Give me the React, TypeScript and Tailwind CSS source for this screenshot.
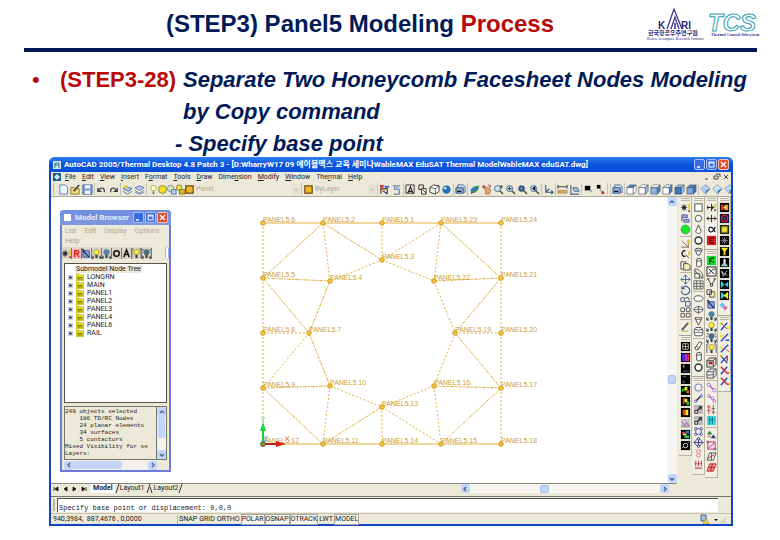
import type { ReactNode } from 'react'
import clsx from 'clsx'

const line = (d: string, color = '#222', width = 1, fill = 'none') => (
  <path d={d} stroke={color} strokeWidth={width} fill={fill} />
)
const tile = (children: ReactNode, bg = '#000') => (
  <>
    <rect x="1" y="1" width="10" height="10" fill={bg} />
    {children}
  </>
)
const cube = (top: string, left: string, right: string) => (
  <>
    <path d="M1 4 4 1h7L8 4z" fill={top} stroke="#345" strokeWidth=".6" />
    <path d="M1 4h7v7H1z" fill={left} stroke="#345" strokeWidth=".6" />
    <path d="M8 4l3-3v7l-3 3z" fill={right} stroke="#345" strokeWidth=".6" />
  </>
)
const gem = (a: string, b: string) => (
  <>
    <path d="M6 1l5 4-5 6-5-6z" fill={a} stroke="#456" strokeWidth=".6" />
    <path d="M1 5l5 2v4zM6 7l5-2-5-4-5 4z" fill={b} />
  </>
)
const lens = (extra: ReactNode) => (
  <>
    <path d="M7.5 7.5 11 11" stroke="#553" strokeWidth="1.6" />
    <circle cx="5" cy="5" r="3.3" fill="#cfe2f5" stroke="#46688c" />
    {extra}
  </>
)
const bulb = (color: string, extra?: ReactNode) => (
  <>
    <circle cx="6" cy="4.5" r="3" fill={color} stroke="#665" strokeWidth=".6" />
    <path d="M4.8 7.5h2.4V11H4.8z" fill="#345" />
    {extra}
  </>
)
const corners = line('M1 11l2-2M11 11 9 9M1 8v3h2M11 8v3H9', '#123')
const dots = (points: number[][], color: string, r = 1.3) =>
  points.map(([x, y]) => <circle key={`${x}-${y}`} cx={x} cy={y} r={r} fill="#fff" stroke={color} strokeWidth=".9" />)

const icons: Record<string, ReactNode> = {
  new: line('M2 1h6l2.500 3v7H2z', '#5b7fae', 1, '#eef5ff'),
  open: <>{line('M1 4h4l1 1h4v6H1z', '#8a7430', 1, '#f3dc7e')}{line('M4 8l6-7', '#334', 1.6)}</>,
  save: <>{line('M1 1h10v10H1z', '#3d5f94', 1, '#7f9fd0')}<path d="M3 1h6v4H3zM3 7h6v4H3z" fill="#eef" /></>,
  undo: line('M2 4v4h4M3 8c1-5 7-5 6 1', '#334', 1.300),
  redo: line('M10 4v4H6M9 8C8 3 2 3 3 9', '#334', 1.300),
  layers: <>{line('M1 5l4-2 6 2-4 3z', '#5376ac', 1, '#a9c3e8')}{line('M1 8l5 3 5-3', '#5376ac')}<circle cx="4" cy="3" r="2" fill="#e6cf3a" /></>,
  layerState: <>{line('M1 4l5-2 5 2-5 3z', '#5376ac', 1, '#b9cfee')}{line('M1 7l5 3 5-3M1 9l5 2 5-2', '#6d87b4')}</>,
  bulbOn: <><circle cx="6" cy="4.500" r="3" fill="#ffffb0" stroke="#99975c" strokeWidth=".8" /><path d="M5 8h2v3H5z" fill="#778" /></>,
  sun: <circle cx="6" cy="6" r="4.300" fill="#f0e02a" stroke="#80803c" />,
  freeze: <><circle cx="5" cy="5" r="3.500" fill="#d9e6ba" stroke="#6f87a5" />{line('M6 6h5v5H6z', '#5c7bab', 1, '#b7cae6')}</>,
  lock: <><circle cx="4.500" cy="4" r="3" fill="#f1de55" stroke="#887621" />{line('M5 6h6v5H5z', '#887621', 1, '#e0b62b')}</>,
  swatch: <rect x="2" y="2" width="8" height="8" fill="#f0b428" stroke="#5e3d0c" strokeWidth="1.200" />,
  props: <><path d="M1 1h4v3H1z" fill="#c33" /><path d="M6 2h5v2H6z" fill="#36c" />{line('M2 11V5h7v6M4 7l5 4', '#446', 1.3)}<path d="M3 5h3v3H3z" fill="#e08a3c" /></>,
  match: <>{line('M2 2h8M4 2v4h5v5H3', '#6883a6', 1.3)}<path d="M5 3h4v3H5z" fill="#9cc1e5" /></>,
  dimA: <>{line('M1 1h9v9H1z', '#333')}{line('M3 10l3-7 3 8M4 8h4', '#222', 1.200)}</>,
  blocks: <>{line('M2 1h5v5H2z', '#333', 1, '#ddd')}{line('M5 5h5v6H5z', '#333', 1, '#f2f2f2')}{line('M6 6l4 4', '#333')}</>,
  box: <>{line('M1 4l4-3 6 1v6l-4 3-6-2z', '#333', 1, '#fff')}{line('M1 4l6 1 4-3M7 5v6', '#333', .8)}</>,
  ball: <><circle cx="6" cy="6" r="4.500" fill="#2870b8" /><circle cx="4.500" cy="4.500" r="1.600" fill="#b5dcf7" /></>,
  sheets: <>{line('M3 1h6l2 2v6H3z', '#46688c', 1, '#dbe8f8')}{line('M1 4h8v6H1z', '#2e5686', 1, '#8fb1dc')}{line('M2 8h5', '#123', 1.4)}</>,
  orbit: <><path d="M2 10C2 4 6 1 11 2 11 7 7 11 2 10z" fill="#2fa04a" /><path d="M1 7c2-3 6-5 9-3-2 4-6 5-9 3z" fill="#3577cf" />{line('M2 11l4-4', '#c33')}</>,
  pan: <><path d="M4 4h5l2 3-2 4H5z" fill="#e7a27d" stroke="#753" strokeWidth=".6" />{line('M1 3h4M3 1v4M8 1l3 2', '#b33', 1.200)}</>,
  zoomRt: lens(<path d="M9 1v4M7 3h4" stroke="#444" />),
  zoomIn: lens(<path d="M5 3v4M3 5h4" stroke="#224" />),
  zoomAll: lens(<path d="M3 3h4v4H3z" stroke="#224" fill="#6d90bd" />),
  zoomPrev: lens(<path d="M7 2 3 5l4 3z" fill="#224" />),
  ucs: line('M3 1v8h8M3 9l4-4M9 7l2 2-2 2', '#31547f', 1.200),
  dist: <>{line('M1 3h10M1 1v4M11 1v4', '#333')}<path d="M1 7h10v3H1z" fill="#e0b04b" stroke="#865" strokeWidth=".6" /></>,
  area: <>{line('M2 1v10h9', '#46688c', 1.200)}{line('M4 4h5l2 4H6z', '#46688c', 1, '#a9c3e8')}</>,
  flag: <><path d="M2 2h6v5H2z" fill="#000" /><path d="M8 7h2v2H8z" fill="#999" /></>,
  flags: <><path d="M2 1h4v4H2z" fill="#000" /><path d="M7 8h3v3H7z" fill="#c22" />{line('M5 5l3 4', '#777')}</>,
  vTop: cube('#4c86c6', '#fff', '#fff'),
  vBottom: cube('#fff', '#fff', '#9fc0e4'),
  vLeft: cube('#fff', '#8db4e0', '#4c86c6'),
  vRight: cube('#dcebfa', '#fff', '#4c86c6'),
  vFront: cube('#9fc0e4', '#3c78bb', '#9fc0e4'),
  vBack: cube('#4c86c6', '#7ea9da', '#3c78bb'),
  isoA: gem('#4c86c6', '#b5d0ee'),
  isoB: gem('#3c78bb', '#cfe2f6'),
  isoC: gem('#3c78bb', '#bfd8f3'),
  node: <><circle cx="4.500" cy="6" r="2.200" fill="#222" />{line('M1 6h7M4.500 2v8M2 3l5 6M7 3 2 9', '#333', .7)}<path d="M9 2h2v6H9z" fill="#e3cc1f" /><path d="M9 9h2v2H9z" fill="#b33" /></>,
  tree: <>{line('M2 2h6v3H2zM4 7h6v3H4z', '#5a62ac', 1, '#99a4df')}{line('M2 5v4', '#336')}</>,
  green: <circle cx="6" cy="6" r="4.800" fill="#15e825" stroke="#3a7a3a" strokeWidth=".7" />,
  axes: <>{line('M1 10h9M2 3l7 7V2', '#865', 1)}<path d="M8 2h3v4H8z" fill="#dfc93a" /></>,
  rotC: <>{line('M6 2C1 1 1 9 6 8', '#222', 1.500)}{line('M6 6l4 4', '#922')}<path d="M9 2h2v5H9z" fill="#dfc93a" /></>,
  copyDoc: <>{line('M1 2h5v8H1z', '#444', 1, '#fff')}{line('M4 4h5l2 2v5H4z', '#444', 1, '#f6eebb')}</>,
  move: line('M6 1v10M1 6h10M4 3l2-2 2 2M4 9l2 2 2-2M3 4 1 6l2 2M9 4l2 2-2 2', '#3b5f96', 1),
  rotate: line('M3 3c5-4 9 2 7 5-2 4-9 3-8-2M2 1v3h3', '#3b5f96', 1.200),
  scale: <>{line('M1 2h4v4H1zM6 6h5v5H6z', '#46607e', 1, '#dde6f2')}{line('M6 2c3-1 4 0 4 3', '#333')}</>,
  array: line('M1 1h4v4H1zM7 1h4v4H7zM1 7h4v4H1zM7 7h4v4H7z', '#555'),
  pencil: <>{line('M2 10l7-8', '#555', 2)}{line('M2 11h7', '#b9a130', 1)}<path d="M8 3l2-2 1 1-2 2z" fill="#d7b843" /></>,
  square: line('M2 2h8v8H2z', '#444', 1, '#fff'),
  circle: <circle cx="6" cy="6" r="3.500" fill="#fff" stroke="#444" />,
  cone: line('M6 1 3 8c0 3 6 3 6 0z', '#444', 1, '#fff'),
  ring: <circle cx="6" cy="6" r="3.800" fill="#fff" stroke="#333" strokeWidth="1.500" />,
  funnel: <>{line('M2 4l3 6h2l3-6', '#444', 1, '#fff')}<ellipse cx="6" cy="4" rx="4" ry="1.500" fill="#ddd" stroke="#444" /></>,
  cylinder: <>{line('M4 3v7c1 1 4 1 5 0V3', '#444', 1, '#fff')}<ellipse cx="6.500" cy="3" rx="2.500" ry="1.500" fill="#fff" stroke="#444" /></>,
  wedge: line('M2 1v10h9C11 5 7 1 2 1zM2 6h5v5M2 3l8 7', '#444', .9),
  grid: line('M1 2h10v9H1zM4 2v9M8 2v9M1 5h10M1 8h10', '#555', .9),
  ellipse: <ellipse cx="6" cy="6" rx="4.800" ry="3" fill="#fff" stroke="#444" />,
  ellipseX: <><ellipse cx="6" cy="6" rx="4.800" ry="3" fill="#fff" stroke="#444" />{line('M1 6h10M6 2v9', '#444', .8)}</>,
  drop: <>{line('M2 3l4 8 4-8z', '#444', 1, '#fff')}{line('M3 5h6', '#444', .8)}</>,
  drum: <>{line('M2 3c-1 2-1 4 0 7 2 1 6 1 8 0 1-3 1-5 0-7', '#444', 1, '#fff')}<ellipse cx="6" cy="3" rx="4" ry="1.500" fill="#fff" stroke="#444" />{line('M2 7h8', '#444', .8)}</>,
  tube: <>{line('M2 9 7 2l3 1-4 7z', '#444', 1, '#fff')}<circle cx="4" cy="9" r="1.800" fill="#fff" stroke="#444" /></>,
  arrowsIn: <>{line('M1 6h8M6 2v8M2 4v4M8 4l-2 2 2 2', '#222', 1)}<path d="M9 2h2v5H9z" fill="#dfc93a" /><path d="M9 8h2v2H9z" fill="#b33" /></>,
  arrowsOut: line('M1 6h10M6 2v8M3 4 1 6l2 2M9 4l2 2-2 2', '#222', 1),
  alpha: <><rect x="1" y="1" width="10" height="10" fill="#fff" />{line('M10 3C8 10 3 10 3 6s4-4 7 3', '#222', 1.300)}</>,
  redC: tile(line('M9 4C7 2 4 3 4 6s3 4 5 2M4 6h3', '#400', 1.300), '#e8161c'),
  greenF: tile(<>{line('M4 10V4l5-1M4 7l3-1', '#030', 1.400)}<circle cx="8" cy="8" r="1" fill="#a00" /></>, '#0ee52e'),
  spline: <>{line('M1 1h10v10H1z', '#222', 1, '#eee')}{line('M2 9c3-1 3-5 8-6M3 3l6 6', '#222')}</>,
  tri: <>{line('M2 2l4 7 4-7M1 2h3M8 2h3', '#333')}<circle cx="6" cy="9" r="1.400" fill="#ddd" stroke="#333" /></>,
  copyCube: <>{line('M1 2h5v5H1zM4 4h5v6H4z', '#444', 1, '#f4f1e0')}<path d="M9 5h2v5H9z" fill="#dfc93a" /></>,
  blueCube: <>{line('M2 3h7v7H2z', '#35509c', 1, '#8fa3dd')}{line('M2 3l7 7M1 1l3 2', '#224', 1.200)}</>,
  bulbBlue: bulb('#4f86b5', corners),
  bulbYellow: bulb('#ffee30', corners),
  bulbDark: bulb('#466c90', <>{corners}{line('M1 2h2M9 2h2M1 4v2M11 4v2', '#345')}</>),
  bulbBox: bulb('#ffee30', line('M1 1v10M11 1v10M1 1h2M9 1h2', '#555')),
  redCube: <>{line('M1 4l3-3h7v7l-3 3H1z', '#333', 1, '#ddd')}{line('M1 4h7l3-3M8 4v7', '#333', .9)}<path d="M3 5h4v3H3z" fill="#b22" /></>,
  greyCube: <>{line('M1 4l3-3h7v7l-3 3H1z', '#444', 1, '#e8e8e8')}{line('M1 4h7l3-3M8 4v7M2 8l6-1', '#444', .9)}</>,
  t1: tile(<><path d="M2 3h3v6H2z" fill="#e03020" /><path d="M6 3h4v6H6z" fill="#f09030" /><path d="M5 5h3v2H5z" fill="#fff37a" /></>),
  t2: tile(<><circle cx="6" cy="6" r="3.300" fill="none" stroke="#d22" strokeWidth="1.400" /><circle cx="6" cy="6" r="1.200" fill="#26c" /></>, '#15153a'),
  t3: tile(<path d="M3 3h6v6H3z" fill="#f2e642" stroke="#998d20" />, '#262618'),
  t4: tile(<>{line('M3 3l6 6M9 3 3 9M6 2v8M2 6h8', '#999', .8)}</>),
  t5: tile(<path d="M2 2h8L7 6v4H5V6z" fill="#f5e722" />),
  t6: tile(<><path d="M5 2h2v4l3 4H2l3-4z" fill="#9cc" /><path d="M5 3h2v3H5z" fill="#fff" /></>),
  t7: tile(line('M2 4l7 4M4 9l5-6M3 3l2 6', '#ccc', 1)),
  t8: tile(<><path d="M2 2l4 4-4 4z" fill="#20d5e8" /><path d="M10 3v6L6 6z" fill="#20d5e8" /></>),
  t9: tile(<><path d="M2 2l5 4-5 4z" fill="#20d5e8" /><path d="M10 2v8L5 6z" fill="#f5e722" /></>),
  pills: <>{line('M3 4l5 5', '#ef7ad0', 4)}{line('M2 3l3 3', '#5ec8ef', 4)}{line('M6 9l3-3', '#a03a80', .8)}</>,
  v1: <>{line('M2 10l7-8', '#2b45cf', 1.600)}<path d="M1 2h4v2H1zM8 6h3v3H8z" fill="#f0df36" />{line('M2 2l7 7', '#667')}</>,
  v2: <>{line('M2 10l8-8M7 9h4', '#2b45cf', 1.500)}<path d="M1 3h4v3H1z" fill="#f0df36" /></>,
  v3: <>{line('M2 10l8-8', '#2b45cf', 1.500)}<path d="M1 3l4 2-2 3z" fill="#f0df36" />{line('M8 7l3 3', '#d33')}</>,
  v4: <>{line('M2 10l7-8M2 2l7 8', '#2b45cf', 1.500)}{line('M9 2v6', '#cf2f2b', 1.500)}<path d="M1 1h3v2H1z" fill="#e6bd36" /></>,
  v5: <>{line('M2 10l7-8', '#2b45cf', 1.600)}{line('M2 2l7 7h2', '#cf2b2b', 1.600)}</>,
  c1: tile(<>{line('M3 3h6v6H3z', '#bbb')}{line('M3 6h6M6 3v6', '#c9c050', .9)}</>),
  c2: tile(<><path d="M2 2h3v8H2z" fill="#3e2fe0" /><path d="M5 2h3v8H5z" fill="#b32bd0" /><path d="M8 2h2v8H8z" fill="#e33" /></>),
  c3: tile(<><path d="M3 2h2v3H3z" fill="#888" />{line('M3 9h7', '#4568a0')}</>),
  c4: tile(<><path d="M3 7h2v3H3z" fill="#456" />{line('M3 3h4', '#777')}</>),
  c5: tile(<><path d="M2 4h3v3H2z" fill="#1c2" /><path d="M5 2h3v4H5z" fill="#ee3" /><path d="M7 6h3v3H7z" fill="#d63" /></>),
  c6: tile(<><path d="M3 2h2v7H3z" fill="#d33" /><path d="M5 3h3v4H5z" fill="#ee3" /><path d="M7 6h3v4H7z" fill="#3b3" /></>),
  c7: tile(<><path d="M3 3h3v6H3z" fill="#e42" /><path d="M6 3h3v6H6z" fill="#fe3" /></>),
  c8: <>{tile(null, '#c9c4cc')}{line('M2 4l3 4 2-3 3 4', '#a25a9c')}{line('M2 9h8', '#887')}</>,
  c9: tile(<><path d="M2 3h4v2H2z" fill="#e33" /><path d="M3 5h4v2H3z" fill="#ee3" /><path d="M5 7h5v3H5z" fill="#2c6" /><path d="M6 2h4v3H6z" fill="#27d" /></>),
  c10: tile(<><circle cx="6" cy="6" r="2.500" fill="none" stroke="#ddd" />{line('M2 9l2-2M9 3l1-1', '#aaa')}</>),
  b1: <circle cx="6" cy="6" r="3.800" fill="none" stroke="#7d7fe2" strokeWidth="1.200" />,
  b2: <>{line('M3 9l6-6', '#222', 1.400)}{dots([[3, 9], [9, 3]], '#44b')}</>,
  b3: <>{tile(null, '#bbb')}{line('M3 9l6-6M6 3h3v3', '#222', 1.200)}{line('M2 7h3v3H2z', '#222', 1, '#fff')}</>,
  b4: <>{line('M3 3h6v6H3z', '#55b')}{dots([[3, 3], [9, 3], [3, 9], [9, 9]], '#338')}</>,
  b5: <>{line('M6 1l5 5-5 5-5-5zM6 1v10M1 6h10', '#338')}{dots([[6, 2], [6, 10]], '#224')}</>,
  b6: <>{dots([[6, 4], [6, 8]], '#e5605c', 2)}{line('M3 2l1 1M9 2 8 3', '#e5605c')}</>,
  b7: <>{line('M2 10h8M3 2v6M6 2v6M9 2v6', '#b9494e', 1.200)}{line('M2 5h8', '#b9494e', .7)}</>,
  p1: <>{line('M3 3l6 6', '#c04cc9', 1.500)}{dots([[3, 3], [9, 9]], '#8f5bd6', 1.700)}</>,
  p2: <>{line('M3 3l6 5', '#7d5fd6', 1.500)}{dots([[3, 3], [7, 6], [9, 9]], '#b053cf', 1.400)}</>,
  p3: <>{line('M3 1v10M1 3h4M1 7h4', '#c44', 1)}{line('M8 1v10M6 5h4M6 9h4', '#666', 1)}</>,
  p4: <>{tile(null, '#35d8e4')}{line('M4 2v8M7 2v8M3 5h6', '#26727c', 1)}</>,
  p5: <><path d="M1 6l3-4 3 4z" fill="#29802e" /><path d="M5 10l3-4 3 4z" fill="#2a3fa0" />{line('M2 8h3', '#c33')}</>,
  p6: <>{line('M2 2h8v8H2z', '#c33', 1, '#f5d9e8')}{line('M2 10l8-8', '#84b')}{dots([[2, 2], [10, 10]], '#339', 1)}</>,
  p7: <>{line('M4 2h7L8 10H1z', '#555', 1, '#eee')}{line('M2 8l7-4M6 2v8', '#a33')}</>,
  p8: <>{line('M4 2h7L8 10H1z', '#b22', 1, '#f39a9a')}{line('M3 6h7M7 2 5 10', '#b22', 1.200)}</>,
  letterR: tile(line('M4 10V3h3c2 0 2 3 0 3H4M6 6l3 4', '#d22', 1.500), '#f5b8bd'),
  letterO: <circle cx="6" cy="6" r="3" fill="none" stroke="#111" strokeWidth="1.600" />,
  letterA: line('M3 10l3-8 3 8M4 7h4', '#111', 1.600),
}

const Icon = ({ name }: { name: string }) => (
  <svg viewBox="0 0 12 12" className="size-[11px] shrink-0" aria-hidden="true">{icons[name]}</svg>
)

const Tool = ({ name }: { name: string }) => (
  <button type="button" aria-label={name} className="flex size-[11px] shrink-0 items-center justify-center">
    <Icon name={name} />
  </button>
)

const Divider = () => <span className="mx-px h-3 w-px shrink-0 bg-[#c5c2b3]" />

const ToolGroup = ({ names }: { names: string[] }) => (
  <div className="flex shrink-0 items-center gap-px">
    {names.map((name) => <Tool key={name} name={name} />)}
  </div>
)

const LayerSelect = ({ label, value, width }: { label: string; value: string; width: string }) => (
  <div className={clsx('flex shrink-0 items-center', width)}>
    <select aria-label={label} defaultValue={value} className="h-[11px] w-full appearance-none bg-transparent pl-px text-[7px] leading-[10px] text-[#aca899]">
      <option>{value}</option>
    </select>
    <svg viewBox="0 0 8 10" className="h-[11px] w-2 shrink-0 bg-[#e6e3d3]">
      <path d="M2 4l2 2 2-2" stroke="#b5b1a2" fill="none" />
    </svg>
  </div>
)

const menus = [
  ['', 'F', 'ile'], ['', 'E', 'dit'], ['', 'V', 'iew'], ['', 'I', 'nsert'], ['F', 'o', 'rmat'], ['', 'T', 'ools'],
  ['', 'D', 'raw'], ['Dime', 'n', 'sion'], ['', 'M', 'odify'], ['', 'W', 'indow'], ['The', 'r', 'mal'], ['', 'H', 'elp'],
]

const columns = [
  ['grip', 'node', 'tree', 'green', 'sep', 'axes', 'rotC', 'copyDoc', 'sep', 'move', 'rotate', 'scale', 'array', 'sep', 'pencil', 'end', 'grip', 'c1', 'c2', 'c3', 'c4', 'c5', 'c6', 'c7', 'c8', 'c9', 'c10'],
  ['grip', 'square', 'circle', 'cone', 'ring', 'funnel', 'cylinder', 'wedge', 'grid', 'sep', 'ellipse', 'ellipseX', 'drop', 'drum', 'sep', 'tube', 'cylinder', 'ring', 'end', 'grip', 'b1', 'b2', 'b3', 'b3', 'b4', 'b5', 'b6', 'b7'],
  ['grip', 'arrowsIn', 'arrowsOut', 'alpha', 'redC', 'end', 'grip', 'greenF', 'spline', 'tri', 'copyCube', 'blueCube', 'bulbBlue', 'bulbYellow', 'bulbDark', 'bulbBox', 'sep', 'redCube', 'greyCube', 'sep', 'p1', 'p2', 'p3', 'p4', 'sep', 'p5', 'p6', 'p7', 'p8'],
  ['grip', 't1', 't2', 't3', 't4', 't5', 't6', 't7', 't8', 't9', 'pills', 'end', 'grip', 'v1', 'v2', 'v3', 'v4', 'v5', 'v5'],
]

const SideColumn = ({ items }: { items: string[] }) => (
  <div className="flex w-[13px] flex-col items-center self-start border-r border-b border-[#b5b2a3] bg-[#f1efe2] pb-1">
    {items.map((item, i) => {
      if (item === 'grip') return <span key={i} className="my-px h-[3px] w-[9px] border-y border-[#bab7a8]" />
      if (item === 'sep') return <span key={i} className="my-px h-px w-[11px] bg-[#bab7a8]" />
      if (item === 'end') return <span key={i} className="mt-[3px] h-px w-full bg-[#a5a293]" />
      return <Tool key={i} name={item} />
    })}
  </div>
)

const nodes: Record<number, [number, number]> = {
  6: [14, 13], 2: [74, 13], 1: [133, 13], 23: [192, 13], 24: [252, 13],
  3: [133, 50], 5: [14, 68], 4: [81, 71], 22: [185, 71], 21: [252, 68],
  8: [14, 123], 7: [60, 123], 19: [206, 123], 20: [252, 123],
  9: [14, 178], 10: [81, 176], 13: [133, 197], 16: [185, 176], 17: [252, 178],
  12: [14, 234], 11: [74, 234], 14: [133, 234], 15: [192, 234], 18: [252, 234],
}

const solid = [[6, 2], [2, 1], [1, 23], [23, 24], [12, 11], [11, 14], [14, 15], [15, 18]]
const dashed = [[2, 5], [2, 3], [23, 21], [5, 7], [21, 19], [7, 10], [19, 17], [9, 11], [13, 11], [17, 15], [5, 4], [22, 21], [9, 10], [16, 17], [4, 7]]
const dotted = [
  [6, 5], [5, 8], [8, 9], [9, 12], [24, 21], [21, 20], [20, 17], [17, 18], [1, 3], [23, 3], [2, 4], [23, 22],
  [3, 4], [3, 22], [22, 19], [8, 7], [19, 20], [7, 9], [19, 16], [10, 11], [10, 13], [16, 13], [16, 15], [13, 15], [13, 14],
]

const Edges = ({ pairs, dash }: { pairs: number[][]; dash?: string }) => (
  <g stroke="#e0b040" strokeDasharray={dash}>
    {pairs.map(([a, b]) => (
      <line key={`${a}-${b}`} x1={nodes[a][0]} y1={nodes[a][1]} x2={nodes[b][0]} y2={nodes[b][1]} />
    ))}
  </g>
)

const PanelMesh = () => (
  <svg viewBox="0 0 300 250" className="h-[250px] w-[300px]" role="img" aria-label="Panel 5 node mesh">
    <Edges pairs={solid} />
    <Edges pairs={dashed} dash="4 1 2 1" />
    <Edges pairs={dotted} dash="2 2" />
    {Object.entries(nodes).map(([id, [x, y]]) => (
      <g key={id}>
        <circle cx={x} cy={y} r="2.300" fill="#f2c444" stroke="#d99a14" />
        <text x={x} y={y - 1} fill="#cda032" className="font-['Liberation_Sans',sans-serif] text-[7px]">PANEL5.{id}</text>
      </g>
    ))}
    <path d="M14 233v-16" stroke="#18d53a" strokeWidth="2" />
    <path d="M11 221l3-9 3 9z" fill="#18d53a" />
    <path d="M12 207l2 3 2-3M14 210v3" stroke="#7be88d" fill="none" />
    <path d="M15 234h14" stroke="#b5231c" strokeWidth="2" />
    <path d="M27 231l10 3-10 3z" fill="#d5221a" />
    <path d="M36 226l4 5M40 226l-4 5" stroke="#e98a82" />
    <path d="M15 227h4l-4 4h4" stroke="#6aa6e0" fill="none" />
    <circle cx="14" cy="234" r="2.500" fill="#7d8a4a" stroke="#66713a" />
  </svg>
)

const Arrow = ({ label, d }: { label: string; d: string }) => (
  <button type="button" aria-label={label} className="flex size-[9px] shrink-0 items-center justify-center rounded-xs bg-[#c3d5fb]">
    <svg viewBox="0 0 8 8" className="size-2"><path d={d} stroke="#4d6185" strokeWidth="1.400" fill="none" /></svg>
  </button>
)

const LEFT = 'M5 2 3 4l2 2'
const RIGHT = 'M3 2l2 2-2 2'
const UP = 'M2 5l2-2 2 2'
const DOWN = 'M2 3l2 2 2-2'

const WindowButtons = () => (
  <div className="flex shrink-0 gap-px">
    <button type="button" aria-label="Minimize" className="size-[11px] rounded-xs border border-[#a9c1f5] bg-[#3a6be4]">
      <svg viewBox="0 0 9 9"><path d="M2 7h3" stroke="#fff" strokeWidth="1.500" /></svg>
    </button>
    <button type="button" aria-label="Maximize" className="size-[11px] rounded-xs border border-[#a9c1f5] bg-[#3a6be4]">
      <svg viewBox="0 0 9 9"><path d="M2 2h5v5H2zM2 3h5" stroke="#fff" fill="none" /></svg>
    </button>
    <button type="button" aria-label="Close" className="size-[11px] rounded-xs border border-[#f0c0b0] bg-[#dd5030]">
      <svg viewBox="0 0 9 9"><path d="M2 2l5 5M7 2 2 7" stroke="#fff" strokeWidth="1.300" /></svg>
    </button>
  </div>
)

const submodels = ['LONGRN', 'MAIN', 'PANEL1', 'PANEL2', 'PANEL3', 'PANEL4', 'PANEL6', 'RAIL']

const report = `249 objects selected
    186 TD/RC Nodes
    24 planar elements
    34 surfaces
    5 contactors
Mixed Visibility for se
Layers:`

const ModelBrowser = () => (
  <section className="absolute top-[13px] left-[9px] flex w-[111px] flex-col rounded-t-sm border-2 border-t-0 border-[#6f7bd8] bg-[#ece9d8]">
    <header className="-mx-[2px] flex h-[15px] items-center gap-1 rounded-t-sm bg-gradient-to-b from-[#6f8ee0] to-[#8098e0] pr-[3px] pl-1">
      <span className="h-[7px] w-2 bg-white" />
      <h2 className="flex-1 text-[8px] font-bold whitespace-nowrap text-[#e3eafc]">Model Browser</h2>
      <WindowButtons />
    </header>
    <nav className="flex flex-wrap gap-x-2 px-[3px] pt-px text-[7px] leading-[10px] text-[#aca899]">
      {['List', 'Edit', 'Display', 'Options', 'Help'].map((item) => <button key={item} type="button">{item}</button>)}
    </nav>
    <div className="mt-px flex h-3 items-center overflow-hidden bg-[#d9d6c8]">
      {['node', 'letterR', 'blueCube', 'bulbYellow', 'bulbBlue', 'letterO', 'letterA', 'bulbBox', 'bulbDark'].map((name) => (
        <span key={name} className="flex w-[10px] shrink-0 justify-center overflow-hidden border-r border-[#777]"><Tool name={name} /></span>
      ))}
      <span className="h-full flex-1 bg-[#ece9d8]" />
      <span className="h-[10px] w-1 border-x border-[#9db5ea] bg-white" />
    </div>
    <div className="mx-[2px] mt-1 h-[140px] border border-[#55534a] bg-white pt-px text-[7px] leading-[8px] text-[#222]">
      <p className="ml-[10px] inline-block bg-[#ece9d8] px-px leading-[7px]">Submodel Node Tree</p>
      <ul>
        {submodels.map((name) => (
          <li key={name} className="flex h-2 items-center gap-[3px] pl-[3px]">
            <svg viewBox="0 0 5 5" className="size-[5px]"><path d="M0 0h5v5H0z" fill="#ccd" /><path d="M1 2.500h3M2.500 1v3" stroke="#222" strokeWidth=".8" /></svg>
            <svg viewBox="0 0 8 8" className="size-2"><path d="M0 1h3l1 1h4v6H0z" fill="#f0ea1c" stroke="#99930c" strokeWidth=".6" /><path d="M1 6h2V4H1M4 7V4l1 1 1-1v3" stroke="#554f00" fill="none" strokeWidth=".7" /></svg>
            <span>{name}</span>
          </li>
        ))}
      </ul>
    </div>
    <div className="mx-[2px] mt-[3px] flex border border-[#77756a]">
      <pre className="h-[52px] flex-1 overflow-hidden border-r border-[#77756a] pt-px font-['Liberation_Mono',monospace] text-[6px] leading-[7px] text-[#222]">{report}</pre>
      <div className="flex w-[9px] flex-col items-center bg-[#f3f2ea]">
        <Arrow label="Scroll up" d={UP} />
        <span className="h-[22px] w-[7px] rounded-xs bg-[#c3d5fb]" />
        <span className="flex-1" />
        <Arrow label="Scroll down" d={DOWN} />
      </div>
    </div>
    <div className="mx-[2px] mr-3 flex h-[10px] items-center bg-[#f3f2ea]">
      <Arrow label="Scroll left" d={LEFT} />
      <span className="h-2 w-[49px] rounded-xs bg-[#c3d5fb]" />
      <span className="flex-1" />
      <Arrow label="Scroll right" d={RIGHT} />
    </div>
  </section>
)

const KariLogo = () => (
  <svg viewBox="0 0 62 36" className="h-9 w-[62px]" role="img" aria-label="KARI">
    <path d="M22 23 29 3l8 20M26 23l4-12 4 12" stroke="#41388a" strokeWidth="1.300" fill="none" />
    <path d="M30 17v6" stroke="#41388a" strokeWidth="1.600" />
    <g fill="#2b2a78" className="font-['Liberation_Sans','Noto_Sans_CJK_KR',sans-serif] font-bold">
      <text x="13" y="23" className="text-[10px]">K</text>
      <text x="36" y="23" className="text-[10px]">RI</text>
    </g>
    <text x="3" y="29" fill="#2b2a78" className="font-['Noto_Sans_CJK_KR',sans-serif] text-[6px] font-bold">한국항공우주연구원</text>
    <text x="2" y="34" fill="#2b2a78" className="font-['Liberation_Serif',serif] text-[4px]">Korea Aerospace Research Institute</text>
  </svg>
)

const TcsLogo = () => (
  <svg viewBox="0 0 55 30" className="h-[30px] w-[55px]" role="img" aria-label="TCS">
    <text x="1" y="22" fill="#fff" stroke="#2f9db0" className="font-['Liberation_Sans',sans-serif] text-[24px] font-bold italic">TCS</text>
    <text x="4" y="27" fill="#3a3a8c" className="font-['Liberation_Serif',serif] text-[4px] font-bold">Thermal Control Subsystem</text>
  </svg>
)

const statusModes = [
  ['SNAP', false], ['GRID', false], ['ORTHO', false], ['POLAR', true], ['OSNAP', true], ['OTRACK', true], ['LWT', false], ['MODEL', true],
] as const

const CadWindow = () => (
  <section className="relative mr-[47px] mb-[14px] ml-[49px] -mt-[3px] flex flex-1 flex-col rounded-t-md border-x-2 border-b-2 border-[#0d45c4] bg-[#ece9d8] font-['Roboto','Noto_Sans_CJK_KR',sans-serif] text-[7px] text-[#222]">
    <header className="-mx-[2px] flex h-[15px] items-center gap-[3px] rounded-t-md bg-gradient-to-b from-[#2f80f5] via-[#0a50dc] to-[#0850d8] pr-1 pl-1 text-white">
      <svg viewBox="0 0 8 8" className="size-2 shrink-0"><path d="M0 0h8v8H0z" fill="#d5e6ea" /><path d="M2 7V2h4v5M2 4h4" stroke="#247a8a" fill="none" /></svg>
      <h2 className="flex-1 overflow-hidden text-[8px] font-bold whitespace-nowrap">AutoCAD 2005/Thermal Desktop 4.8 Patch 3 - [D:WharryW17 09 에이블맥스 교육 세미나WableMAX EduSAT Thermal ModelWableMAX eduSAT.dwg]</h2>
      <WindowButtons />
    </header>
    <nav className="flex h-[10px] items-center gap-[6px] pl-[2px] leading-[9px]">
      <svg viewBox="0 0 8 8" className="-mr-[2px] size-2 shrink-0"><path d="M0 0h8v8H0z" fill="#1c5c8c" /><path d="M4 1l3 3-3 3-3-3z" fill="#cfe6ee" /></svg>
      {menus.map(([before, key, after]) => (
        <button key={key + after} type="button">{before}<u>{key}</u>{after}</button>
      ))}
      <span className="flex-1" />
      <svg viewBox="0 0 28 8" className="h-2 w-7"><path d="M2 6h3M11 3h4v3h-4zM13 1h4v3M21 2l4 4M25 2l-4 4" stroke="#444" fill="none" /></svg>
    </nav>
    <div className="flex h-[15px] items-center overflow-hidden border-b border-[#aca899] pl-[2px]">
      <span className="mr-[3px] h-3 w-[2px] shrink-0 border-l border-[#bab7a8]" />
      <ToolGroup names={['new', 'open', 'save']} /><Divider />
      <ToolGroup names={['undo', 'redo']} /><Divider />
      <ToolGroup names={['layers', 'layerState']} /><Divider />
      <div className="flex shrink-0 -space-x-[2px]">
        {['bulbOn', 'sun', 'freeze', 'lock', 'swatch'].map((name) => <Icon key={name} name={name} />)}
      </div>
      <LayerSelect label="Layer" value="Panel" width="w-[105px]" /><Divider />
      <Icon name="swatch" />
      <LayerSelect label="Color" value="ByLayer" width="w-[62px]" /><Divider />
      <ToolGroup names={['props', 'match']} /><Divider />
      <ToolGroup names={['dimA', 'blocks', 'box', 'ball']} /><Divider />
      <ToolGroup names={['sheets']} /><Divider />
      <ToolGroup names={['orbit', 'pan', 'zoomRt', 'zoomIn', 'zoomAll', 'zoomPrev']} /><Divider />
      <ToolGroup names={['ucs']} /><Divider />
      <ToolGroup names={['dist', 'area']} /><Divider />
      <ToolGroup names={['flag', 'flags']} /><Divider /><Divider />
      <ToolGroup names={['sheets']} /><Divider />
      <ToolGroup names={['vTop', 'vBottom', 'vLeft', 'vRight', 'vFront', 'vBack']} /><Divider />
      <ToolGroup names={['isoA', 'isoB', 'isoC']} />
    </div>

    <div className="flex flex-1">
      <div className="flex flex-1 flex-col">
        <div className="flex flex-1">
          <div className="relative flex-1 bg-white pt-[13px] pl-[198px]">
            <PanelMesh />
            <ModelBrowser />
          </div>
          <div className="flex w-[10px] flex-col items-center bg-[#f6f5ef]">
            <Arrow label="Scroll up" d={UP} />
            <span className="flex-[17]" />
            <span className="h-[9px] w-2 rounded-xs border border-[#a9bff0] bg-[#c3d5fb]" />
            <span className="flex-[9]" />
            <Arrow label="Scroll down" d={DOWN} />
          </div>
        </div>
        <div className="flex h-[10px] items-center border-t border-[#8a887c]">
          <svg viewBox="0 0 40 8" className="h-2 w-10 shrink-0"><path d="M3 2v4M7 2 4 4l3 2zM16 2l-3 2 3 2zM22 2l3 2-3 2zM31 2l3 2-3 2zM35 2v4" fill="#111" stroke="#111" strokeWidth=".8" /></svg>
          <button type="button" className="bg-white pr-[2px] pl-[2px] leading-[9px] font-bold">Model</button>
          <svg viewBox="0 0 5 9" className="h-[9px] w-[5px]"><path d="M4 0 1 9" stroke="#333" /></svg>
          <button type="button" className="leading-[9px]">Layout1</button>
          <svg viewBox="0 0 9 9" className="h-[9px] w-[9px]"><path d="M5 0 2 9M5 3l2 6" stroke="#333" fill="none" /></svg>
          <button type="button" className="leading-[9px]">Layout2</button>
          <svg viewBox="0 0 5 9" className="h-[9px] w-[5px]"><path d="M4 0 1 9" stroke="#333" /></svg>
          <span className="flex-[4]" />
          <div className="flex flex-[3] items-center bg-[#f6f5ef]">
            <Arrow label="Scroll left" d={LEFT} />
            <span className="flex-[7]" />
            <span className="h-2 w-[9px] rounded-xs border border-[#a9bff0] bg-[#c3d5fb]" />
            <span className="flex-[11]" />
            <Arrow label="Scroll right" d={RIGHT} />
          </div>
          <span className="w-2" />
        </div>
      </div>
      <aside className="flex pl-[2px]">
        {columns.map((items, i) => <SideColumn key={i} items={items} />)}
      </aside>
    </div>

    <div className="mt-[3px] flex h-[17px] border-t border-[#77756a] pt-px">
      <span className="mx-[2px] mt-px h-3 w-[2px] border-x border-[#bab7a8]" />
      <input
        aria-label="Command"
        defaultValue="Specify base point or displacement: 0,0,0"
        className="mr-[13px] h-[14px] min-w-0 flex-1 border-t border-l border-[#55534a] bg-white pt-[5px] pl-px font-['Liberation_Mono',monospace] text-[7px] leading-[8px]"
      />
    </div>
    <footer className="flex h-[11px] items-center border-t border-[#c5c2b3] pr-1 leading-[9px]">
      <span className="w-[127px] border-r border-[#bab7a8] pl-[2px]">940,3984,&nbsp; 887,4676 , 0,0000</span>
      {statusModes.map(([mode, on]) => (
        <button key={mode} type="button" className={clsx('border', on ? 'border-[#aca899] bg-[#f6f5ef]' : 'border-transparent')}>{mode}</button>
      ))}
      <span className="flex-1" />
      <svg viewBox="0 0 28 10" className="h-[10px] w-7">
        <path d="M2 1h5v6H2z" fill="#a9c3e8" stroke="#46688c" />
        <path d="M4 10l3-6 3 6z" fill="#f0df36" stroke="#776" strokeWidth=".6" />
        <path d="M15 5h4l-2 2z" fill="#111" />
        <path d="M22 9l5-5M25 9l2-2" stroke="#b5b2a3" />
      </svg>
    </footer>
  </section>
)

const App = () => {
  return (
    <main className="flex min-h-screen flex-col bg-white font-['Liberation_Sans',sans-serif] text-[#001a57]">
      <header className="flex h-12 items-center pr-[18px] pl-[75px]">
        <h1 className="flex-1 text-center text-[24px] font-bold whitespace-nowrap">
          (STEP3) Panel5 Modeling <span className="text-[#b80808]">Process</span>
        </h1>
        <div className="flex shrink-0 items-center">
          <KariLogo />
          <TcsLogo />
        </div>
      </header>
      <hr className="mr-[23px] ml-6 h-1 border-0 bg-[#001a57]" />
      <ul className="pt-3 pl-8 text-[22px] leading-8 font-bold whitespace-nowrap">
        <li className="flex">
          <span className="w-7 font-normal text-[#b80808]">•</span>
          <span className="w-[123px] text-[#b80808]">(STEP3-28)</span>
          <p className="italic">
            Separate Two Honeycomb Facesheet Nodes Modeling<br />
            by Copy command<br />
            <span className="-ml-2">- Specify base point</span>
          </p>
        </li>
      </ul>
      <CadWindow />
    </main>
  )
}

export default App
